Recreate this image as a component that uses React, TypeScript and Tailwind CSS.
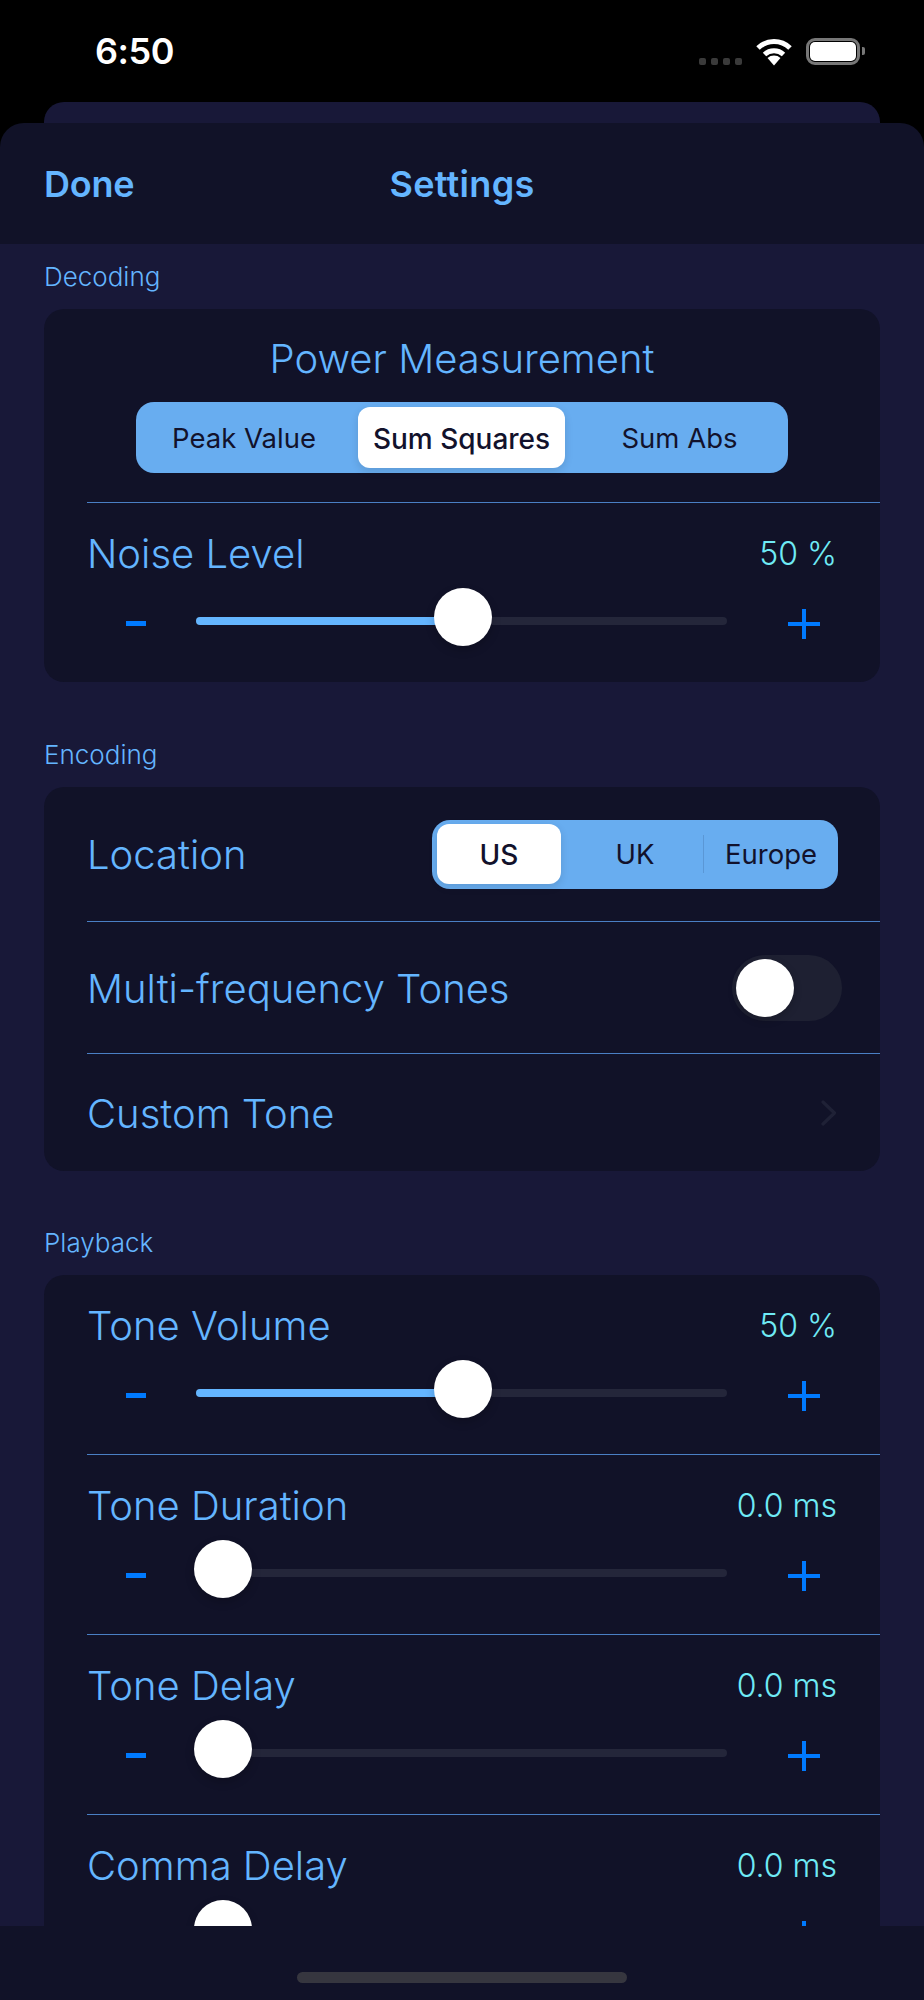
const font = { fontFamily: 'Inter, "Liberation Sans", sans-serif' }

const SegmentLabel = ({ label, selected, className }: { label: string; selected?: boolean; className: string }) => (
    <div
        className={`flex items-center justify-center pt-[2px] text-[#12122c] ${
            selected ? 'bg-white rounded-[12px] text-[28px] font-medium shadow-[0_3px_8px_rgba(0,0,0,0.12)]' : 'text-[27.5px]'
        } ${className}`}
    >
        {label}
    </div>
)

const SliderRow = ({ title, value, percent, first }: { title: string; value: string; percent: number; first?: boolean }) => (
    <div className={`ml-[43px] pr-[43px] pt-[29px] ${first ? 'h-[179px]' : 'h-[180px] border-t border-[#4a7fc4]'}`}>
        <div className="flex items-center justify-between h-[44px]">
            <span className="text-[40px] font-light text-[#64b5ff]">{title}</span>
            <span className="text-[32px] font-light text-[#6feaf5]">{value}</span>
        </div>
        <div className="mt-[12px] flex h-[58px] items-center">
            <div className="w-[97px] flex justify-center pt-[13px]">
                <div className="w-[20px] h-[5px] bg-[#007aff]" />
            </div>
            <div className="relative ml-[12px] w-[531px] h-[8px] mt-[7px] rounded-full bg-[#24263a]">
                <div className="h-full rounded-full bg-[#64b5ff]" style={{ width: `${percent * 5.3}px` }} />
                <div
                    className="absolute top-[-29px] w-[58px] h-[58px] rounded-full bg-white shadow-[0_4px_10px_rgba(0,0,0,0.2)]"
                    style={{ left: `${percent * 4.79 - 2}px` }}
                />
            </div>
            <div className="flex-1 flex justify-end pr-[17px] pt-[13px]">
                <div className="relative w-[32px] h-[30px]">
                    <div className="absolute left-0 right-0 top-[13px] h-[4px] bg-[#007aff]" />
                    <div className="absolute top-0 bottom-0 left-[14px] w-[4px] bg-[#007aff]" />
                </div>
            </div>
        </div>
    </div>
)

const Section = ({ label, className, children }: { label: string; className: string; children: React.ReactNode }) => (
    <div className={className}>
        <div className="h-[31px] mb-[17px] pl-[44px] flex items-center text-[26px] font-light text-[#64b5ff]">{label}</div>
        <div className="mx-[44px] rounded-[20px] bg-[#111228] overflow-hidden">{children}</div>
    </div>
)

const ListRow = ({ title, height, border, children }: { title: string; height: string; border?: boolean; children: React.ReactNode }) => (
    <div className={`ml-[43px] pr-[43px] flex items-center justify-between ${height} ${border ? 'border-t border-[#4a7fc4]' : ''}`}>
        <span className="pt-[2px] text-[40px] font-light text-[#64b5ff]">{title}</span>
        {children}
    </div>
)

const StatusIcons = () => (
    <div className="flex items-center">
        <div className="flex gap-[5px] mt-[21px]">
            <div className="w-[7px] h-[7px] rounded-[2px] bg-[#3a3a3a]" />
            <div className="w-[7px] h-[7px] rounded-[2px] bg-[#3a3a3a]" />
            <div className="w-[7px] h-[7px] rounded-[2px] bg-[#3a3a3a]" />
            <div className="w-[7px] h-[7px] rounded-[2px] bg-[#3a3a3a]" />
        </div>
        <svg className="ml-[14px] mt-[2px]" width="36" height="28" viewBox="0 0 36 28" fill="none">
            <path d="M2 10 A23 23 0 0 1 34 10" stroke="#fff" strokeWidth="5" />
            <path d="M8.5 16.5 A14 14 0 0 1 27.5 16.5" stroke="#fff" strokeWidth="5" />
            <path d="M11.5 20 L18 27.5 L24.5 20 A10 10 0 0 0 11.5 20 Z" fill="#fff" />
        </svg>
        <div className="ml-[14px] w-[54px] h-[27px] rounded-[9px] border-[3px] border-[#777] p-[1px]">
            <div className="w-full h-full rounded-[5px] bg-white" />
        </div>
        <div className="ml-[2px] w-[3px] h-[8px] rounded-r-[2px] bg-[#777]" />
    </div>
)

const App = () => {
    return (
        <div className="w-[924px] h-[2000px] bg-black flex flex-col overflow-hidden" style={font}>
            <div className="h-[102px] pl-[95px] pr-[59px] flex items-center justify-between">
                <span className="text-[36px] font-semibold tracking-[-0.5px] text-white">6:50</span>
                <StatusIcons />
            </div>
            <div className="mx-[44px] h-[21px] rounded-t-[20px] bg-[#181838]" />
            <div className="flex-1 min-h-0 flex flex-col rounded-t-[24px] overflow-hidden bg-[#111228]">
                <div className="h-[121px] shrink-0 relative flex items-center justify-center">
                    <span className="absolute left-[44px] text-[36px] font-semibold tracking-[-0.2px] text-[#64b5ff]">Done</span>
                    <span className="text-[36px] font-semibold tracking-[0.3px] text-[#64b5ff]">Settings</span>
                </div>
                <div className="flex-1 min-h-0 overflow-hidden bg-[#181838]">
                    <Section label="Decoding" className="pt-[17px]">
                        <div className="pt-[28px] h-[193px] flex flex-col items-center">
                            <div className="h-[44px] flex items-center text-[40px] font-light text-[#64b5ff]">Power Measurement</div>
                            <div className="mt-[21px] w-[652px] h-[71px] rounded-[18px] bg-[#68adf0] flex items-center pl-[10px]">
                                <SegmentLabel label="Peak Value" className="w-[196px] h-[61px] mr-[16px]" />
                                <SegmentLabel label="Sum Squares" selected className="w-[207px] h-[61px]" />
                                <SegmentLabel label="Sum Abs" className="flex-1 h-[61px] pl-[6px]" />
                            </div>
                        </div>
                        <SliderRow title="Noise Level" value="50 %" percent={50} />
                    </Section>
                    <Section label="Encoding" className="mt-[57px]">
                        <ListRow title="Location" height="h-[134px]">
                            <div className="w-[406px] h-[69px] mr-[-1px] rounded-[18px] bg-[#68adf0] flex items-center pl-[5px]">
                                <SegmentLabel label="US" selected className="w-[124px] h-[60px]" />
                                <SegmentLabel label="UK" className="w-[142px] h-[60px] pl-[6px]" />
                                <div className="w-px h-[38px] bg-[#5a97d6]" />
                                <SegmentLabel label="Europe" className="flex-1 h-[60px]" />
                            </div>
                        </ListRow>
                        <ListRow title="Multi-frequency Tones" height="h-[132px]" border>
                            <div className="w-[110px] h-[66px] mr-[-5px] rounded-full bg-[#1e2032] flex items-center pl-[4px]">
                                <div className="w-[58px] h-[58px] rounded-full bg-white shadow-[0_3px_8px_rgba(0,0,0,0.2)]" />
                            </div>
                        </ListRow>
                        <ListRow title="Custom Tone" height="h-[118px]" border>
                            <svg width="16" height="26" viewBox="0 0 16 26" fill="none">
                                <path d="M2 2 L13.5 13 L2 24" stroke="#1f2136" strokeWidth="3.2" strokeLinecap="round" strokeLinejoin="round" />
                            </svg>
                        </ListRow>
                    </Section>
                    <Section label="Playback" className="mt-[56px]">
                        <SliderRow title="Tone Volume" value="50 %" percent={50} first />
                        <SliderRow title="Tone Duration" value="0.0 ms" percent={0} />
                        <SliderRow title="Tone Delay" value="0.0 ms" percent={0} />
                        <SliderRow title="Comma Delay" value="0.0 ms" percent={0} />
                    </Section>
                </div>
                <div className="h-[74px] shrink-0 flex justify-center pt-[46px]">
                    <div className="w-[330px] h-[11px] rounded-full bg-[#36363f]" />
                </div>
            </div>
        </div>
    )
}

export default App
